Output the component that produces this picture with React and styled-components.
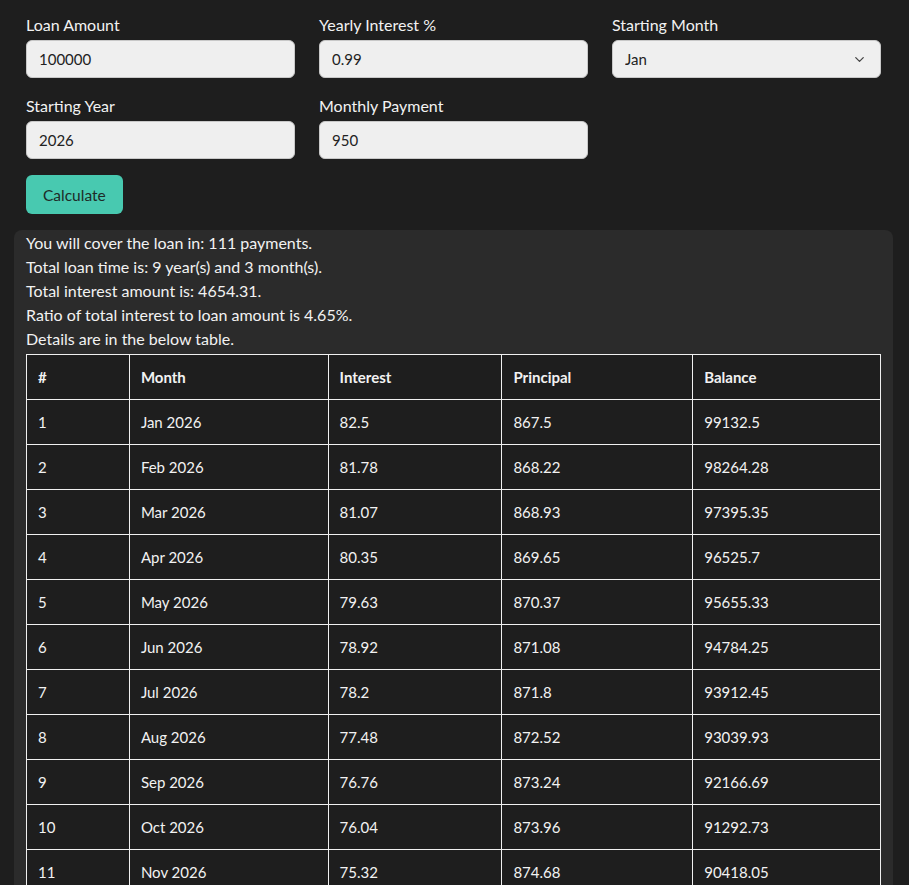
import React from 'react'
import styled, { createGlobalStyle } from 'styled-components'
import { ChevronDown } from 'lucide-react'

const GlobalStyle = createGlobalStyle`
  html, body {
    margin: 0;
    padding: 0;
    background: #1e1e1e;
    color: #f2f2f2;
    font-family: "Segoe UI", Lato, "Noto Sans", sans-serif;
    font-size: 16px;
  }
  * { box-sizing: border-box; }
`

const MONTHS = ['Jan', 'Feb', 'Mar', 'Apr', 'May', 'Jun', 'Jul', 'Aug', 'Sep', 'Oct', 'Nov', 'Dec']

const round2 = (n) => Math.round(n * 100) / 100

function buildSchedule(amount, rate, payment, month, year, limit) {
  const rows = []
  let balance = amount
  let m = month
  let y = year
  let i = 1
  while (balance > 0 && i <= limit) {
    const interest = round2(balance * rate / 100 / 12)
    let principal = round2(payment - interest)
    if (principal > balance) principal = balance
    balance = round2(balance - principal)
    rows.push({ i, month: `${MONTHS[m]} ${y}`, interest, principal, balance })
    i++
    m++
    if (m > 11) { m = 0; y++ }
  }
  return rows
}

// only the rows that fit the screen
const rows = buildSchedule(100000, 0.99, 950, 0, 2026, 11)

const Page = styled.div`
  padding: 13px 28px 0 26px;
`

const Form = styled.div`
  display: grid;
  grid-template-columns: repeat(3, 1fr);
  column-gap: 24px;
  row-gap: 16px;
`

const Field = styled.div`
  display: flex;
  flex-direction: column;
  gap: 3px;

  label {
    line-height: 24px;
  }
`

const Input = styled.input`
  height: 38px;
  width: 100%;
  padding: 0 12px;
  font: inherit;
  font-size: 15px;
  color: #222;
  background: #efefef;
  border: 1px solid #c8c8c8;
  border-radius: 6px;
  outline: none;
`

const SelectWrap = styled.div`
  position: relative;

  svg {
    position: absolute;
    right: 14px;
    top: 12px;
    color: #444;
    pointer-events: none;
  }
`

const Select = styled.select`
  appearance: none;
  height: 38px;
  width: 100%;
  padding: 0 12px;
  font: inherit;
  font-size: 15px;
  color: #222;
  background: #efefef;
  border: 1px solid #c8c8c8;
  border-radius: 6px;
  outline: none;
`

const Button = styled.button`
  margin-top: 16px;
  height: 39px;
  padding: 0 17px;
  font: inherit;
  font-size: 15.5px;
  color: #1e2b28;
  background: #48c9b0;
  border: none;
  border-radius: 6px;
  cursor: pointer;
`

const Results = styled.div`
  margin: 16px -12px 0;
  padding: 1px 12px 12px;
  background: #2b2b2b;
  border-radius: 8px;

  p {
    margin: 0;
    line-height: 24px;
  }
`

const Table = styled.table`
  width: 100%;
  border-collapse: collapse;
  background: #1e1e1e;
  margin-top: 3px;

  th, td {
    border: 1px solid #f0f0f0;
    height: 45px;
    padding: 0 11px;
    text-align: left;
    font-size: 15px;
  }

  th {
    font-weight: 700;
  }
`

const Col = styled.col`
  width: ${(p) => p.$w}px;
`

export default function App() {
  return (
    <>
      <GlobalStyle />
      <Page>
        <Form>
          <Field>
            <label>Loan Amount</label>
            <Input defaultValue="100000" />
          </Field>
          <Field>
            <label>Yearly Interest %</label>
            <Input defaultValue="0.99" />
          </Field>
          <Field>
            <label>Starting Month</label>
            <SelectWrap>
              <Select defaultValue="Jan">
                {MONTHS.map((m) => (
                  <option key={m}>{m}</option>
                ))}
              </Select>
              <ChevronDown size={15} strokeWidth={2} />
            </SelectWrap>
          </Field>
          <Field>
            <label>Starting Year</label>
            <Input defaultValue="2026" />
          </Field>
          <Field>
            <label>Monthly Payment</label>
            <Input defaultValue="950" />
          </Field>
        </Form>
        <Button>Calculate</Button>
        <Results>
          <p>You will cover the loan in: 111 payments.</p>
          <p>Total loan time is: 9 year(s) and 3 month(s).</p>
          <p>Total interest amount is: 4654.31.</p>
          <p>Ratio of total interest to loan amount is 4.65%.</p>
          <p>Details are in the below table.</p>
          <Table>
            <colgroup>
              <Col $w={103} />
              <Col $w={199} />
              <Col $w={174} />
              <Col $w={191} />
              <Col $w={188} />
            </colgroup>
            <thead>
              <tr>
                <th>#</th>
                <th>Month</th>
                <th>Interest</th>
                <th>Principal</th>
                <th>Balance</th>
              </tr>
            </thead>
            <tbody>
              {rows.map((r) => (
                <tr key={r.i}>
                  <td>{r.i}</td>
                  <td>{r.month}</td>
                  <td>{r.interest}</td>
                  <td>{r.principal}</td>
                  <td>{r.balance}</td>
                </tr>
              ))}
            </tbody>
          </Table>
        </Results>
      </Page>
    </>
  )
}
